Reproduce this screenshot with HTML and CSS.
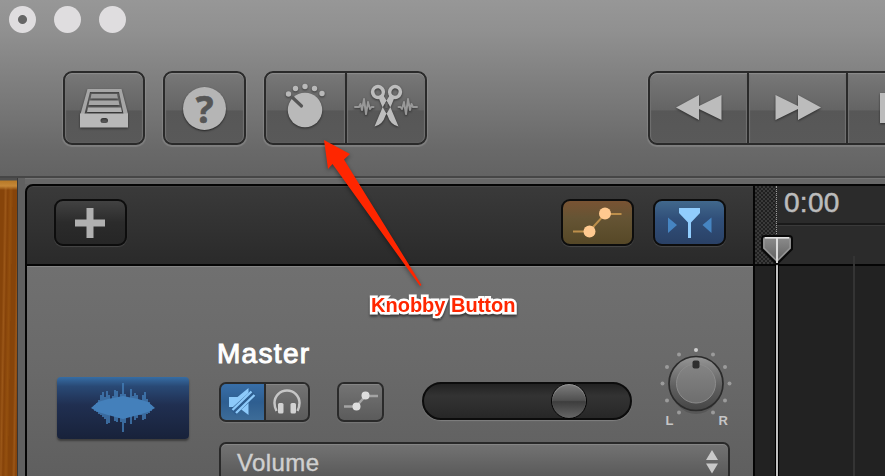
FILE: index.html
```
<!DOCTYPE html>
<html lang="en">
<head>
<meta charset="utf-8">
<title>Knobby Button</title>
<link rel="stylesheet" href="styles.css">
</head>
<body>
<div class="window">
  <header class="titlebar">
    <div class="lights"><i class="light edited"></i><i class="light"></i><i class="light"></i></div>
    <div class="tools">
      <div class="group library">
        <button class="btn"><svg class="icon" width="50" height="42" viewBox="0 0 50 42">
          <path fill="#a6a6a6" fill-rule="evenodd" d="M8.500 2h34l6.500 25H1.500zM11 5L5.500 27h39L40 5z"/>
          <path fill="#9c9c9c" d="M12.500 7H38l1 4.500H11.500z"/>
          <path fill="#a6a6a6" d="M10.500 13.500h29l1 4.500h-31z"/>
          <path fill="#b0b0b0" d="M9 20.500h33l1 4.500H8z"/>
          <path fill="#b8b8b8" fill-rule="evenodd" d="M1 26.500h48v14H1zM24 31a2.500 2.500 0 0 0 0 5h2.500a2.500 2.500 0 0 0 0-5z"/>
        </svg></button>
      </div>
      <div class="group help">
        <button class="btn"><span class="question">?</span></button>
      </div>
      <div class="group smart">
        <button class="btn"><svg class="icon" width="42" height="46" viewBox="0 0 42 46">
          <g fill="#b9b9b9"><circle cx="4.500" cy="11" r="2.700"/><circle cx="11.500" cy="5.500" r="2.700"/><circle cx="21" cy="3.500" r="2.700"/><circle cx="30.500" cy="5.500" r="2.700"/><circle cx="38" cy="10.500" r="2.700"/><circle cx="21" cy="27" r="17.200"/></g>
          <path d="M9 15l8.500 8" stroke="#555" stroke-width="3.200" stroke-linecap="round"/>
        </svg></button>
        <button class="btn"><svg class="icon" width="64" height="44" viewBox="0 0 64 44">
          <g fill="none" stroke="#989898" stroke-width="2" stroke-linecap="round" stroke-linejoin="round"><path d="M1 23h4l1.500-3 1.500 6 2-11 2 15 2-12 2 7 1.500-2h2"/><path d="M63 23h-4l-1.500-3-1.500 6-2-11-2 15-2-12-2 7-1.500-2h-2"/></g>
          <g fill="none" stroke="#bdbdbd" stroke-width="3.600"><ellipse cx="24" cy="8" rx="5.300" ry="5.500" transform="rotate(-20 24 8)"/><ellipse cx="41" cy="8" rx="5.300" ry="5.500" transform="rotate(20 41 8)"/></g>
          <path fill="#bdbdbd" d="M24.500 13.500l5-2 7 12 8 19q-8-1.500-11-11L28 22zM40.500 13.500l-5-2-7 12-8 19q8-1.500 11-11l5.500-9.500z"/>
          <path d="M32.500 18.500v5.500" stroke="#666" stroke-width="2.400"/>
        </svg></button>
      </div>
      <div class="group transport">
        <button class="btn"><svg class="icon" width="46" height="26" viewBox="0 0 46 26"><path fill="#bcbcbc" d="M0 12.500L23 0v11L45.500 0v25L23 14v11z"/></svg></button>
        <button class="btn"><svg class="icon" width="46" height="26" viewBox="0 0 46 26"><path fill="#bcbcbc" d="M46 12.500L23 0v11L.5 0v25L23 14v11z"/></svg></button>
        <button class="btn stop"><svg class="icon" width="30" height="30" viewBox="0 0 30 30"><path fill="#bcbcbc" d="M0 0h30v30H0z"/></svg></button>
      </div>
    </div>
  </header>
  <main class="body">
    <div class="wood"></div>
    <section class="tracks">
      <div class="trackbar">
        <button class="mini add"><svg width="30" height="30" viewBox="0 0 30 30"><path fill="#b0b0b0" d="M11.500 0h7v11.500H30v7H18.500V30h-7V18.500H0v-7h11.500z"/></svg></button>
        <button class="mini automation"><svg width="50" height="32" viewBox="0 0 50 32"><path d="M0 24.500h16L32 7h16.500" fill="none" stroke="#bd8f4b" stroke-width="2"/><g fill="#ffc98f"><circle cx="16.500" cy="24.500" r="6"/><circle cx="32" cy="6.500" r="6"/></g></svg></button>
        <button class="mini catch"><svg width="44" height="30" viewBox="0 0 44 30"><path fill="#4685c2" d="M0 9.500l9 7.500L0 25zM43.500 9.500l-9 7.500 9 8z"/><path fill="#91cdfd" d="M11 0h21v5l-9 9.500V30h-3V14.500L11 5z"/></svg></button>
      </div>
      <div class="track">
        <div class="art"><svg width="64" height="50" viewBox="0 0 64 50"><path fill="#4480bb" d="M0 25l7-6 10-3 15-3 15 3 10 3 7 6-7 4-10 3-15 4-15-4-10-3z"/><path stroke="#4480bb" stroke-width="1.500" d="M4 22v6M6 20v9M8 17v14M10 12v20M12 9v25M14 14v22M16 8v33M18 12v28M20 16v14M22 13v18M24 7v31M26 8v31M28 16v19M30 11v28M32 0v49M34 11v29M36 17v14M38 15v19M40 6v35M42 13v20M44 10v27M46 12v23M48 17v15M50 17v15M52 12v25M54 9v27M56 16v15M58 19v11M60 22v6"/></svg></div>
        <div class="strip">
          <h1 class="name">Master</h1>
          <div class="controls">
            <div class="pair">
              <button class="small mute"><svg width="27" height="28" viewBox="0 0 27 28"><path fill="#8dcafa" d="M0 9h8.500l11-9v27L9 19H0z"/><path d="M4 24L25 5" stroke="#2e5e90" stroke-width="7.500"/><path d="M3.500 22L22.500 3.500M7 25L25.500 7" stroke="#8dcafa" stroke-width="2.400"/></svg></button>
              <button class="small phones"><svg width="28" height="26" viewBox="0 0 28 26"><path d="M3.500 22Q1.500 18 1.500 14a12.500 12.500 0 0 1 25 0q0 4-2 8" fill="none" stroke="#c6c6c6" stroke-width="2.500"/><rect x="5" y="14" width="5.500" height="10.500" rx="1.500" fill="#d2d2d2"/><rect x="17.500" y="14" width="5.500" height="10.500" rx="1.500" fill="#d2d2d2"/></svg></button>
            </div>
            <div class="single"><button class="small"><svg width="34" height="22" viewBox="0 0 34 22"><path d="M0 15.500h12L21.500 5H34" fill="none" stroke="#a4a4a4" stroke-width="2.400"/><g fill="#dedede"><circle cx="12.500" cy="15.500" r="4"/><circle cx="21.500" cy="4.500" r="4"/></g></svg></button></div>
            <div class="slider"><i class="thumb"></i></div>
          </div>
          <div class="select"><span>Volume</span><svg width="12" height="24" viewBox="0 0 12 24"><path fill="#c9c9c9" d="M6 0l6 10H0zM0 13.500h12L6 23.500z"/></svg></div>
        </div>
        <svg class="pan" width="80" height="86" viewBox="0 0 80 86">
          <defs>
            <linearGradient id="rim" x2="0" y2="1"><stop offset="0" stop-color="#969696"/><stop offset=".55" stop-color="#606060"/><stop offset="1" stop-color="#454545"/></linearGradient>
            <linearGradient id="cap" x2="0" y2="1"><stop offset="0" stop-color="#848484"/><stop offset="1" stop-color="#6e6e6e"/></linearGradient>
          </defs>
          <g fill="#9b9b9b"><circle cx="40" cy="7" r="2" fill="#cfcfcf"/><circle cx="23" cy="11.500" r="2"/><circle cx="57" cy="11.500" r="2"/><circle cx="11" cy="24" r="2"/><circle cx="69" cy="24" r="2"/><circle cx="6.500" cy="40.500" r="2"/><circle cx="73.500" cy="40.500" r="2"/><circle cx="11" cy="57.500" r="2"/><circle cx="69" cy="57.500" r="2"/><circle cx="23" cy="69.500" r="2"/><circle cx="57" cy="69.500" r="2"/></g>
          <ellipse cx="40" cy="44" rx="25" ry="27" fill="#000" opacity=".13"/>
          <circle cx="40" cy="40.500" r="27" fill="url(#rim)" stroke="#2b2b2b" stroke-width="1.700"/>
          <circle cx="40" cy="40.500" r="19.500" fill="url(#cap)" stroke="#8c8c8c" stroke-width="1"/>
          <rect x="36.500" y="17.500" width="7" height="8" rx="2" fill="#2e2e2e"/>
          <g class="panlabel"><text x="9.500" y="81.500">L</text><text x="62.500" y="81.500">R</text></g>
        </svg>
      </div>
    </section>
    <section class="timeline">
      <div class="ruler"><div class="pre"></div><div class="scale"><span class="time">0:00</span></div></div>
      <div class="lanes"></div>
      <svg class="playhead" width="34" height="292" viewBox="0 0 34 292">
        <defs><linearGradient id="ph" x2="0" y2="1"><stop offset="0" stop-color="#8e8e8e"/><stop offset="1" stop-color="#5c5c5c"/></linearGradient></defs>
        <path d="M17 30v262" stroke="#000" stroke-width="4"/><path d="M17 28v264" stroke="#d8d8d8" stroke-width="1.800"/>
        <path d="M5 1h24q3 0 3 3v10L17 29 2 14V4q0-3 3-3z" fill="url(#ph)" stroke="#080808" stroke-width="2"/>
        <path d="M4 13V5q0-2 2-2h22q2 0 2 2v8L17 26z" fill="none" stroke="#999" stroke-width="1.200"/>
        <path d="M5 2.800h24" stroke="#e2e2e2" stroke-width="1.600"/><path d="M17 3v25" stroke="#dcdcdc" stroke-width="2"/>
      </svg>
    </section>
  </main>
  <svg class="arrow" width="110" height="160" viewBox="0 0 110 160"><path fill="#ff2600" d="M4 0l26 14-6 5.500L101.500 145l-1.500 1L12.500 24 8 29z"/></svg>
  <div class="callout">Knobby Button</div>
</div>
</body>
</html>
```
FILE: styles.css
```
* { box-sizing: border-box; }
body { margin: 0; font-family: "Liberation Sans", Arial, sans-serif; }
button { margin: 0; padding: 0; border: 0; background: none; font: inherit; display: flex; align-items: center; justify-content: center; }
svg { display: block; flex: none; }

.window { position: relative; width: 885px; height: 476px; overflow: hidden; background: #636363; }

.titlebar { height: 178px; background: linear-gradient(#979797, #909090 18%, #7e7e7e 48%, #696969 85%, #636363); border-bottom: 2px solid #464646; padding-top: 6px; }
.lights { display: flex; gap: 18px; padding-left: 9px; height: 65px; }
.light { width: 27px; height: 27px; border-radius: 50%; background: #dfdddf; }
.edited { background: radial-gradient(circle, #666 0 4px, #dfdddf 5px); }

.tools { display: flex; padding-left: 63px; }
.group { display: flex; flex: none; height: 74px; border: 2px solid #2a2a2a; border-radius: 9px; background: #2a2a2a; gap: 2px; box-shadow: 0 1px 1px 1px rgba(160,160,160,.4); overflow: hidden; }
.btn { flex: 1; min-width: 0; background: linear-gradient(#787878, #646464 53%, #575757 54%, #595959); box-shadow: inset 0 1px 1px #8d8d8d, inset 1px 0 1px #6e6e6e, inset -1px 0 1px #6e6e6e; }
.group .btn:first-child { border-radius: 7px 0 0 7px; }
.group .btn:last-child { border-radius: 0 7px 7px 0; }
.group .btn:only-child { border-radius: 7px; }
.library { width: 82px; margin-right: 18px; }
.help { width: 83px; margin-right: 18px; }
.smart { width: 163px; margin-right: 221px; }
.transport { width: 300px; }
.icon { filter: drop-shadow(0 1px 1px rgba(0,0,0,.5)); }
.smart .icon { margin-top: -4px; }
.transport .btn { flex: none; width: 97px; }
.transport .stop { justify-content: flex-start; padding-left: 32px; }
.question { width: 43px; height: 43px; border-radius: 50%; background: #b5b5b5; color: #565656; font: bold 37px/43px "Noto Sans", sans-serif; -webkit-text-stroke: .7px #565656; text-align: center; box-shadow: 0 1px 2px rgba(0,0,0,.6); }

.body { display: grid; grid-template-columns: 25px 730px 130px; height: 298px; }
.wood { border-right: 7px solid #606060; box-shadow: inset -1px 0 #373737; background: linear-gradient(#4e4e4e 0 2px, #b87a28 3px, #c58737 8px, transparent 12px), repeating-linear-gradient(91deg, #86440a 0 4px, #9b5718 6px, #854209 8px, #94500f 11px, #8a470b 13px); }
.tracks, .timeline { border-top: 1px solid #747474; }
.tracks { box-shadow: inset 0 5px #686868; padding-top: 5px; display: flex; flex-direction: column; }
.trackbar { flex: none; height: 82px; display: flex; align-items: center; padding: 0 27px 5px 27px; border: 2px solid #050505; border-radius: 8px 0 0 0; background: linear-gradient(#3a3a3a, #2a2a2a); box-shadow: inset 0 1px #454545; }
.mini { width: 73px; height: 47px; border: 2px solid #0d0d0d; border-radius: 9px; box-shadow: 0 1px 1px #484848; }
.add { background: linear-gradient(#424242, #2b2b2b 50%, #262626); margin-right: auto; }
.add svg { margin-left: -1px; }
.automation { background: linear-gradient(#795333, #655434 40%, #564827); margin-right: 19px; }
.catch { background: linear-gradient(#41688c, #31507a 40%, #2a4166); }

.track { flex: 1; min-height: 0; display: grid; grid-template-columns: 190px 1fr; grid-template-rows: 1fr; border-left: 2px solid #050505; border-right: 2px solid #050505; background: linear-gradient(#707070, #696969 50%, #5f5f5f); box-shadow: inset 0 1px #858585; position: relative; }
.art { width: 132px; height: 62px; margin: 111px 0 0 30px; border-radius: 4px; display: flex; align-items: center; justify-content: center; background: linear-gradient(#366da4, #294975 15%, #202f51 45%, #18223a); box-shadow: 0 2px 2px #3d3d3d; }
.strip { padding: 70px 21px 0 2px; height: 210px; overflow: hidden; }
.name { margin: 0; height: 44px; color: #fff; font-size: 28px; line-height: 36px; font-weight: 400; letter-spacing: 1.3px; -webkit-text-stroke: 1px #fff; text-indent: -2px; }
.controls { display: flex; align-items: flex-start; height: 62px; padding-top: 2px; }
.pair, .single { display: flex; gap: 2px; height: 40px; border: 2px solid #2a2a2a; border-radius: 7px; background: #2a2a2a; overflow: hidden; box-shadow: 0 1px 1px #777; }
.pair { width: 91px; margin-right: 27px; }
.single { width: 47px; margin-right: 38px; }
.small { flex: 1; background: linear-gradient(#747474, #5b5b5b); box-shadow: inset 0 1px #858585; }
.mute { background: linear-gradient(#386fa9, #2e5e90 50%, #3d6c98); box-shadow: none; }
.slider { width: 210px; height: 38px; border: 2px solid #0c0c0c; border-radius: 19px; background: linear-gradient(#222, #333 35%, #272727); box-shadow: 0 1px 1px #808080; padding-left: 127px; }
.thumb { display: block; width: 36px; height: 36px; margin-top: -1px; border: 1px solid #050505; border-radius: 50%; background: linear-gradient(#7d7d7d, #505050 48%, #3d3d3d 52%, #666); box-shadow: inset 0 1px 1px #999; }
.select { width: 511px; height: 40px; display: flex; justify-content: space-between; padding: 6px 10px 0 16px; border: 2px solid #292929; border-radius: 7px; background: linear-gradient(#737373, #575757); box-shadow: inset 0 1px #858585; color: #d0d0d0; font-size: 24px; line-height: 26px; letter-spacing: .4px; -webkit-text-stroke: .4px #d0d0d0; }
.pan { position: absolute; left: 629px; top: 77px; }
.panlabel { font: bold 13px "Liberation Sans", sans-serif; fill: #c6c6c6; }

.timeline { position: relative; display: flex; flex-direction: column; background: #222; padding-top: 5px; box-shadow: inset 0 5px #686868; }
.ruler { display: flex; height: 82px; flex: none; border-top: 2px solid #050505; border-bottom: 2px solid #050505; background: #2b2b2b; }
.pre { width: 22px; background: repeating-conic-gradient(#202020 0 25%, #3a3a3a 0 50%) 0 0 / 4px 4px; border-right: 1px dotted #999; }
.scale { flex: 1; height: 39px; border-bottom: 2px solid #1a1a1a; box-shadow: 0 1px #3a3a3a; padding-left: 7px; }
.time { color: #bcbcbc; font-size: 28px; line-height: 34px; letter-spacing: .3px; -webkit-text-stroke: .5px #bcbcbc; }
.lanes { flex: 1; margin-top: -10px; margin-left: 98px; width: 2px; background: #343434; }
.playhead { position: absolute; left: 5px; top: 56px; }

.arrow { position: absolute; left: 320px; top: 140px; filter: drop-shadow(0 2px 2px rgba(0,0,0,.4)); }
.callout { position: absolute; left: 371px; top: 293px; color: #ff2600; font-size: 20px; line-height: 24px; font-weight: bold; white-space: nowrap; -webkit-text-stroke: 5px #fff; paint-order: stroke fill; filter: drop-shadow(0 2px 1px rgba(0,0,0,.5)); }
```
